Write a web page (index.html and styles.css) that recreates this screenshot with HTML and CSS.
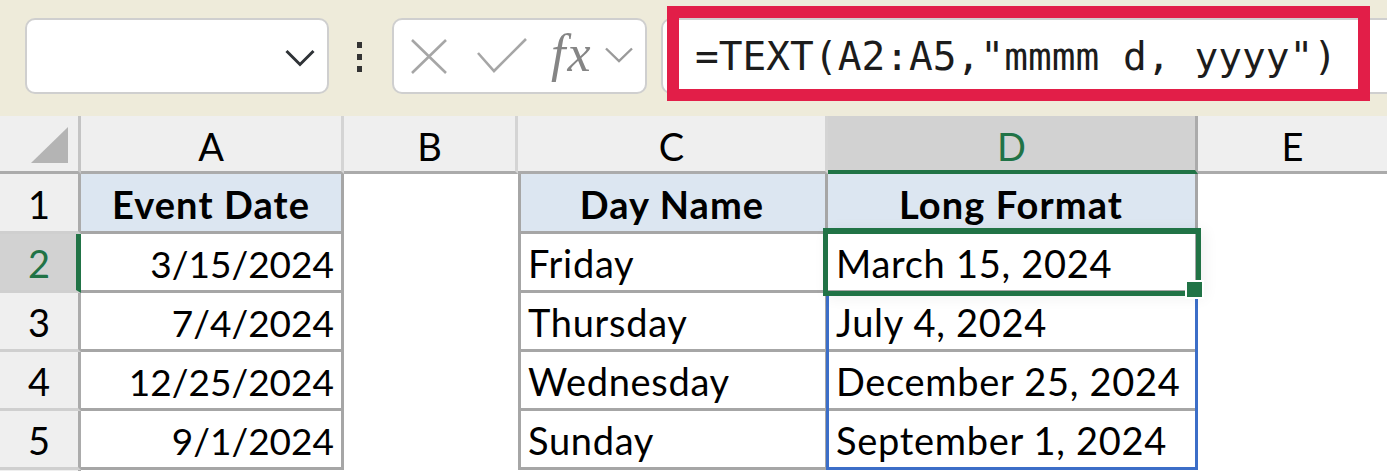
FILE: index.html
```html
<!DOCTYPE html>
<html lang="en">
<head>
  <meta charset="UTF-8">
  <meta name="viewport" content="width=device-width, initial-scale=1.0">
  <title>TEXT formula - date formats</title>
  <link rel="stylesheet" href="styles.css">
</head>
<body>
  <div class="toolbar">
    <div class="namebox">
      <svg class="namebox-chev" width="30" height="18" viewBox="0 0 30 18">
        <path d="M1.5 2 L15 15.5 L28.5 2" fill="none" stroke="#2f3337" stroke-width="3"/>
      </svg>
    </div>
    <div class="grip"><span></span><span></span><span></span></div>
    <div class="fxbox">
      <svg class="icon-cancel" width="36" height="35" viewBox="0 0 36 35">
        <path d="M1 1 L35 34 M35 1 L1 34" fill="none" stroke="#a6a6a6" stroke-width="2.6"/>
      </svg>
      <svg class="icon-enter" width="50" height="36" viewBox="0 0 50 36">
        <path d="M1 15 L17 33 L49 1" fill="none" stroke="#a6a6a6" stroke-width="2.6"/>
      </svg>
      <span class="fx">fx</span>
      <svg class="icon-more" width="28" height="16" viewBox="0 0 28 16">
        <path d="M1 1.5 L14 14 L27 1.5" fill="none" stroke="#9a9a9a" stroke-width="2.4"/>
      </svg>
    </div>
    <div class="formula">
      <span class="formula-text">=TEXT(A2:A5,"mmmm d, yyyy")</span>
      <div class="callout"></div>
    </div>
  </div>

  <div class="sheet-wrap">
    <div class="sheet">
      <!-- column headers -->
      <div class="corner"><span class="corner-tri"></span></div>
      <div class="colhdr">A</div>
      <div class="colhdr">B</div>
      <div class="colhdr">C</div>
      <div class="colhdr active">D</div>
      <div class="colhdr last">E</div>

      <!-- row 1 -->
      <div class="rowhdr">1</div>
      <div class="cell col-a title">Event Date</div>
      <div class="cell"></div>
      <div class="cell col-c title">Day Name</div>
      <div class="cell col-d title">Long Format</div>
      <div class="cell"></div>

      <!-- row 2 -->
      <div class="rowhdr active">2</div>
      <div class="cell col-a num">3/15/2024</div>
      <div class="cell"></div>
      <div class="cell col-c">Friday</div>
      <div class="cell col-d">March 15, 2024</div>
      <div class="cell"></div>

      <!-- row 3 -->
      <div class="rowhdr">3</div>
      <div class="cell col-a num">7/4/2024</div>
      <div class="cell"></div>
      <div class="cell col-c">Thursday</div>
      <div class="cell col-d">July 4, 2024</div>
      <div class="cell"></div>

      <!-- row 4 -->
      <div class="rowhdr">4</div>
      <div class="cell col-a num">12/25/2024</div>
      <div class="cell"></div>
      <div class="cell col-c">Wednesday</div>
      <div class="cell col-d">December 25, 2024</div>
      <div class="cell"></div>

      <!-- row 5 -->
      <div class="rowhdr">5</div>
      <div class="cell col-a num">9/1/2024</div>
      <div class="cell"></div>
      <div class="cell col-c">Sunday</div>
      <div class="cell col-d">September 1, 2024</div>
      <div class="cell"></div>

      <!-- row 6 (cut off) -->
      <div class="rowhdr"></div>
      <div class="cell"></div>
      <div class="cell"></div>
      <div class="cell"></div>
      <div class="cell"></div>
      <div class="cell"></div>
    </div>

    <!-- same grid, only the selection marks -->
    <div class="sheet overlay">
      <div class="spill-range"></div>
      <div class="selection"><span class="fill-handle"></span></div>
    </div>
  </div>
</body>
</html>
```

FILE: styles.css
```css
* {
  margin: 0;
  padding: 0;
  box-sizing: border-box;
}

body {
  font-family: 'Lato', 'Liberation Sans', sans-serif;
  background: #fff;
  color: #000;
  width: 1387px;
  height: 471px;
  overflow: hidden;
}

/* ---------- formula bar ---------- */

.toolbar {
  height: 116px;
  background: #eeebda;
  display: flex;
  align-items: flex-start;
  padding-top: 18px;
  padding-left: 25px;
  overflow: hidden;
}

.namebox {
  flex: none;
  width: 304px;
  height: 76px;
  background: #fff;
  border: 2px solid #cfcfcf;
  border-radius: 10px;
  display: flex;
  align-items: center;
  justify-content: flex-end;
  padding-right: 12px;
  padding-top: 4px;
}

.grip {
  flex: none;
  width: 5px;
  margin-left: 28px;
  margin-top: 24px;
  display: flex;
  flex-direction: column;
  gap: 6px;
}

.grip span {
  width: 5px;
  height: 6px;
  background: #333;
}

.fxbox {
  flex: none;
  width: 255px;
  height: 76px;
  margin-left: 30px;
  background: #fff;
  border: 2px solid #cfcfcf;
  border-radius: 10px;
  display: flex;
  align-items: center;
  padding-left: 17px;
}

.icon-enter {
  margin-left: 30px;
}

.fx {
  font-family: 'Liberation Serif', serif;
  font-style: italic;
  font-size: 52px;
  color: #858585;
  letter-spacing: 2px;
  margin-left: 24px;
  line-height: 1;
  margin-top: -4px;
}

.icon-more {
  margin-left: 12px;
  margin-top: -2px;
}

.formula {
  position: relative;
  flex: none;
  width: 760px;
  height: 76px;
  margin-left: 14px;
  background: #fff;
  border: 2px solid #cfcfcf;
  border-radius: 10px;
  display: flex;
  align-items: center;
  padding-left: 32px;
}

.formula-text {
  font-family: 'DejaVu Sans Mono', 'Liberation Mono', monospace;
  font-size: 39.5px;
  color: #1c1c1c;
  white-space: pre;
}

.callout {
  position: absolute;
  left: 4px;
  top: -14px;
  width: 703px;
  height: 95px;
  border: 12px solid #e21e48;
}

/* ---------- sheet ---------- */

.sheet-wrap {
  display: grid;
  height: 355px;
  overflow: hidden;
}

.sheet {
  grid-area: 1 / 1;
  display: grid;
  grid-template-columns: 81px 263px 174px 310px 370px 1fr;
  grid-template-rows: 58px 60px 59px 59px 59px 59px 1fr;
  font-size: 38px;
}

.overlay {
  pointer-events: none;
  z-index: 1;
}

.corner {
  background: #efefef;
  border-right: 3px solid #c4c4c4;
  border-bottom: 3px solid #ababab;
  display: flex;
  justify-content: flex-end;
  align-items: flex-end;
  padding: 0 10px 8px 0;
}

.corner-tri {
  width: 37px;
  height: 36px;
  background: #b4b4b4;
  clip-path: polygon(100% 0, 100% 100%, 0 100%);
}

.colhdr {
  background: #efefef;
  border-right: 3px solid #d4d4d4;
  border-bottom: 3px solid #ababab;
  display: flex;
  justify-content: center;
  align-items: center;
  padding-top: 4px;
}

.colhdr.active {
  background: #d2d2d2;
  color: #217346;
  border-right-color: #ababab;
  border-bottom: 4px solid #217346;
  padding-top: 5px;
}

.colhdr.last {
  border-right: none;
}

.rowhdr {
  background: #efefef;
  border-right: 3px solid #ababab;
  border-bottom: 3px solid #cfcfcf;
  display: flex;
  justify-content: center;
  align-items: center;
  padding-top: 2px;
}

.rowhdr.active {
  background: #d2d2d2;
  color: #217346;
  border-right: 5px solid #217346;
  padding-left: 2px;
}

.cell {
  display: flex;
  align-items: center;
  padding: 2px 9px 0;
  white-space: nowrap;
  background: #fff;
  letter-spacing: 0.7px;
}

.col-a {
  border-right: 3px solid #a6a6a6;
  border-bottom: 3px solid #a6a6a6;
}

.col-c {
  border-left: 3px solid #a6a6a6;
  border-right: 3px solid #a6a6a6;
  border-bottom: 3px solid #a6a6a6;
  padding-left: 7px;
}

.col-d {
  border-right: 3px solid #a6a6a6;
  border-bottom: 3px solid #a6a6a6;
  padding-left: 8px;
}

.num {
  justify-content: flex-end;
  padding-right: 7px;
  font-size: 37px;
  letter-spacing: 0;
}

.title {
  background: #dce6f1;
  font-weight: bold;
  letter-spacing: 1.1px;
  justify-content: center;
}

.spill-range {
  grid-column: 5;
  grid-row: 4 / 7;
  margin-left: -2px;
  border: 3px solid #3c6ec8;
  border-top: none;
}

.selection {
  grid-column: 5;
  grid-row: 3;
  margin: -6px -3px -3px -5px;
  border: 5px solid #217346;
  border-top-width: 6px;
  position: relative;
  box-shadow: 4px 2px 14px rgba(0, 0, 0, 0.06);
}

.fill-handle {
  position: absolute;
  right: -8px;
  bottom: -8px;
  width: 19px;
  height: 19px;
  background: #217346;
  border: 2px solid #fff;
}
```
